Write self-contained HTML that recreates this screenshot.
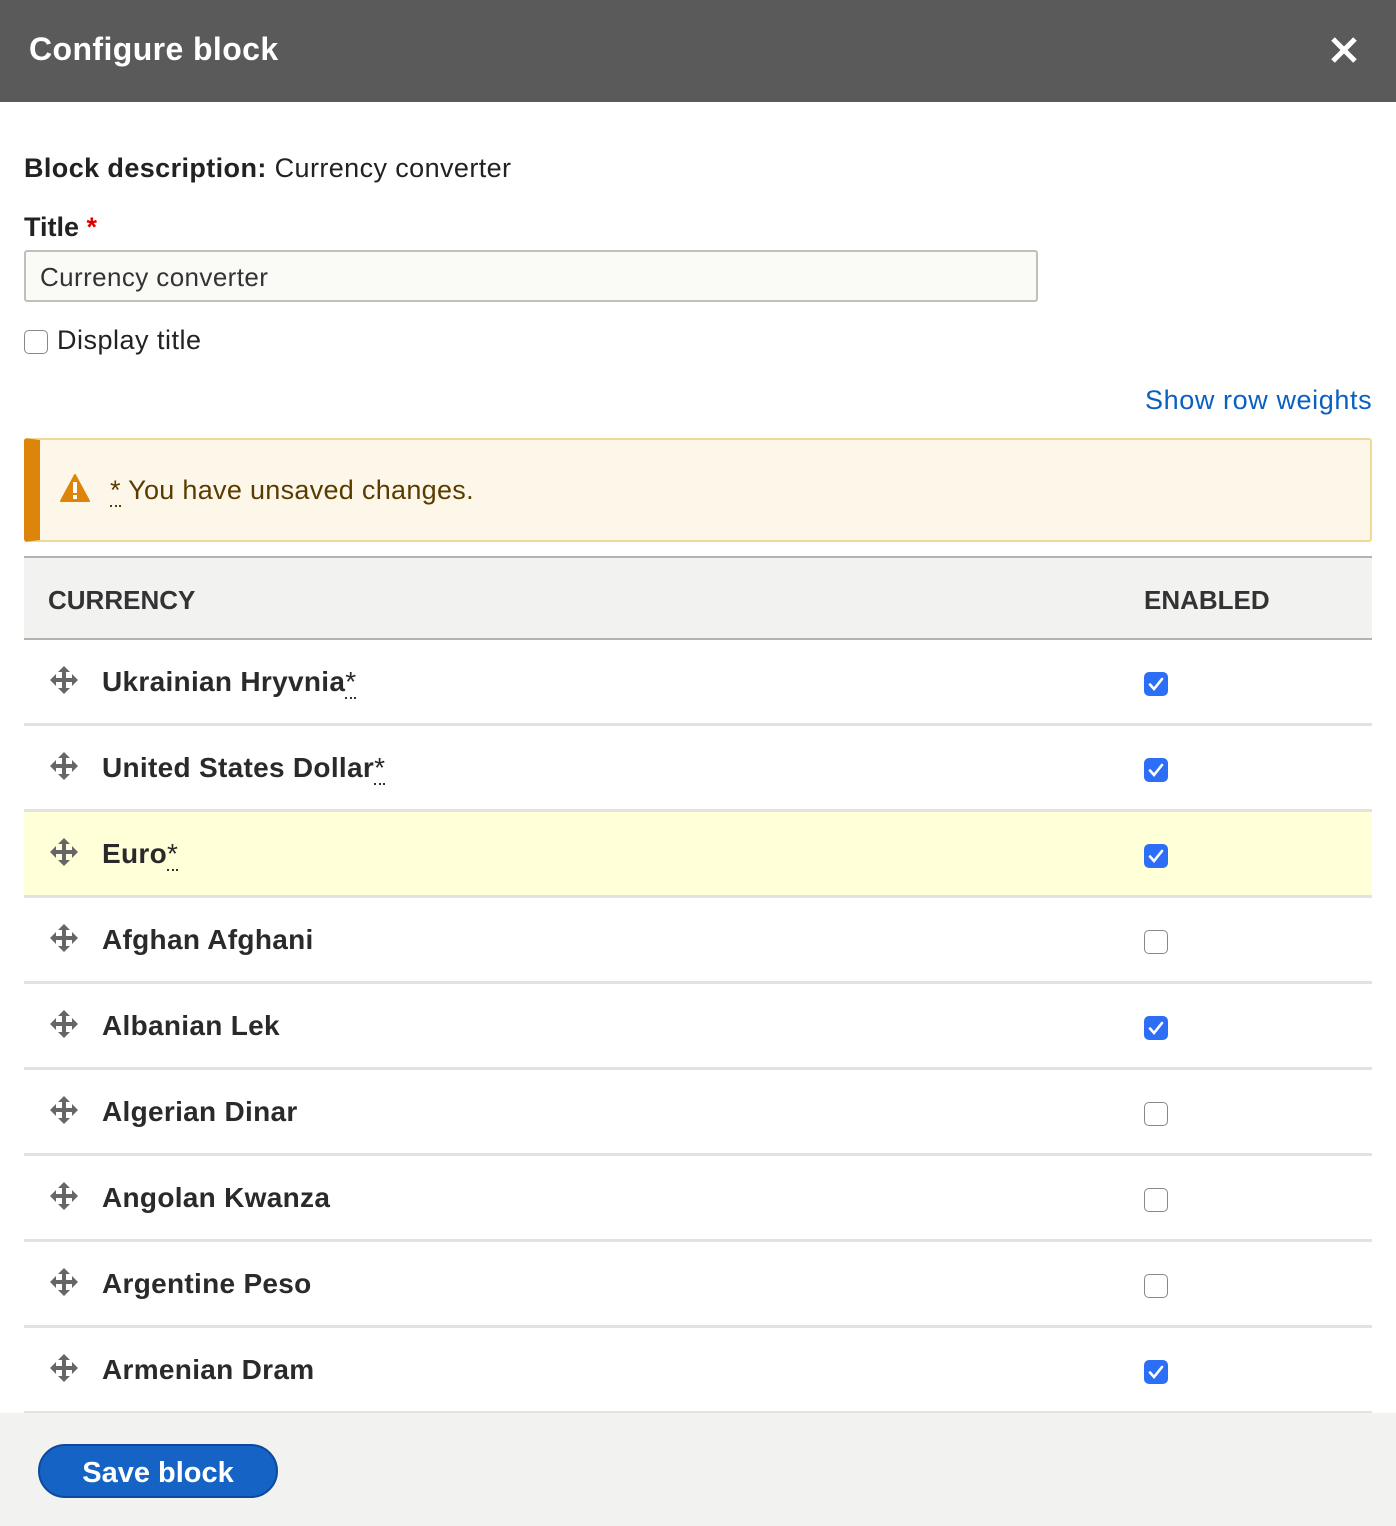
<!DOCTYPE html>
<html><head><style>
*{box-sizing:border-box;margin:0;padding:0}
body{width:1396px;height:1526px;font-family:"Liberation Sans",sans-serif;background:#fff;position:relative;overflow:hidden;color:#222}
.hdr{position:absolute;left:0;top:0;width:1396px;height:102px;background:#5a5a5a;color:#fff}
.hdr h1{position:absolute;left:29px;top:31px;font-size:32px;font-weight:bold;letter-spacing:.4px}
.x{position:absolute;left:1330px;top:36px}
.abs{position:absolute}
.inp{left:24px;top:250px;width:1014px;height:52px;border:2px solid #c0c0bb;border-radius:3px;background:#fafaf7;font-size:26px;padding:10px 14px;color:#333;letter-spacing:.4px}
.cb{width:24px;height:24px;border:1.5px solid #888;border-radius:5px;background:#fff}
.cbc{width:24px;height:24px;border-radius:5px;background:#2d6ef7}
.warn{left:24px;top:438px;width:1348px;height:104px;background:#fdf7ea;border:2px solid #f0d897;border-left:16px solid #dd850a;border-radius:3px}
.th{left:24px;top:556px;width:1348px;height:84px;background:#f2f2f1;border-top:2px solid #b3b3b0;border-bottom:2px solid #b3b3b0}
.th span{position:absolute;top:27px;font-size:26px;font-weight:bold;color:#333}
.row{position:absolute;left:24px;width:1348px;height:86px;border-bottom:3px solid #e3e3de}
.row .n{position:absolute;left:78px;top:26px;font-size:28px;font-weight:bold;color:#2a2a2a;letter-spacing:.3px}
.row .d{position:absolute;left:25px;top:25px}
.row .c{position:absolute;left:1120px;top:32px}
.foot{left:0;top:1413px;width:1396px;height:113px;background:#f2f2f1}
.btn{left:38px;top:1444px;width:240px;height:54px;background:#1563c4;border:2px solid #0b4a9e;border-radius:27px;color:#fff;font-size:29px;font-weight:bold;text-align:center;line-height:54px}
</style></head><body>
<div class="hdr"><h1>Configure block</h1>
<svg class="x" width="28" height="28" viewBox="0 0 28 28"><path d="M3 3L25 25M25 3L3 25" stroke="#fff" stroke-width="5"/></svg></div>
<div class="abs" style="left:24px;top:153px;font-size:27px;letter-spacing:.4px"><b>Block description:</b> Currency converter</div>
<div class="abs" style="left:24px;top:212px;font-size:27px;font-weight:bold">Title <span style="color:#d00">*</span></div>
<div class="abs inp">Currency converter</div>
<div class="abs cb" style="left:24px;top:330px"></div>
<div class="abs" style="left:57px;top:325px;font-size:27px;letter-spacing:.5px">Display title</div>
<div class="abs" style="left:1145px;top:385px;font-size:27px;color:#0a60c0;letter-spacing:.6px">Show row weights</div>
<div class="abs warn">
<svg class="abs" style="left:20px;top:34px" width="30" height="28" viewBox="0 0 30 28"><path d="M15 1L29 27H1Z" fill="#dd850a" stroke="#dd850a" stroke-linejoin="round" stroke-width="2"/><rect x="13" y="8" width="4" height="11" fill="#fff"/><rect x="13" y="21" width="4" height="4" fill="#fff"/></svg>
<div class="abs" style="left:70px;top:35px;font-size:27px;color:#5a3c00;letter-spacing:.3px"><span style="border-bottom:2px dotted #5a3c00">*</span> You have unsaved changes.</div>
</div>
<div class="abs th"><span style="left:24px">CURRENCY</span><span style="left:1120px">ENABLED</span></div>
<div id="rows"></div>
<div class="abs foot"></div>
<div class="abs btn">Save block</div>
<script>
var r=[["Ukrainian Hryvnia",1,1],["United States Dollar",1,1],["Euro",1,1,1],["Afghan Afghani",0],["Albanian Lek",1],["Algerian Dinar",0],["Angolan Kwanza",0],["Argentine Peso",0],["Armenian Dram",1]];
var h="";
r.forEach(function(x,i){
var top=640+i*86;
var star=x[2]?'<span style="border-bottom:2px dotted #333;font-weight:normal">*</span>':'';
var c=x[1]?'<div class="cbc"><svg width="24" height="24" viewBox="0 0 24 24"><path d="M6 12.5L10 17L18 7" stroke="#fff" stroke-width="2.6" fill="none" stroke-linecap="round"/></svg></div>':'<div class="cb"></div>';
h+='<div class="row" style="top:'+top+'px;'+(x[3]?'background:#ffffd8;':'')+'"><svg class="d" width="30" height="30" viewBox="0 0 30 30" fill="#666"><path d="M15 1L21 7H17V13H23V9L29 15L23 21V17H17V23H21L15 29L9 23H13V17H7V21L1 15L7 9V13H13V7H9Z"/></svg><div class="n">'+x[0]+star+'</div><div class="c">'+c+'</div></div>';
});
document.getElementById("rows").innerHTML=h;
</script>
</body></html>
